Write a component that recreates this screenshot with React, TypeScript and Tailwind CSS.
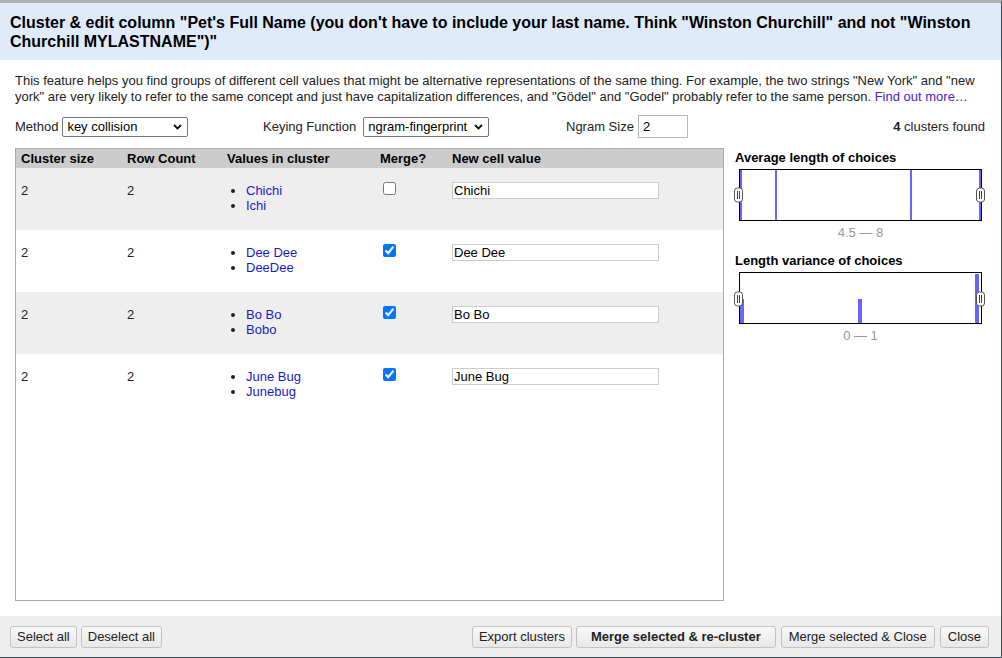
import { ReactNode } from "react";

type Cluster = {
    size: number;
    rowCount: number;
    values: string[];
    merge: boolean;
    newValue: string;
};

const clusters: Cluster[] = [
    { size: 2, rowCount: 2, values: ["Chichi", "Ichi"], merge: false, newValue: "Chichi" },
    { size: 2, rowCount: 2, values: ["Dee Dee", "DeeDee"], merge: true, newValue: "Dee Dee" },
    { size: 2, rowCount: 2, values: ["Bo Bo", "Bobo"], merge: true, newValue: "Bo Bo" },
    { size: 2, rowCount: 2, values: ["June Bug", "Junebug"], merge: true, newValue: "June Bug" },
];

const FakeSelect = function ({ value, width }: { value: string; width: string }) {
    return (
        <div className={`${width} h-[20px] flex items-center border border-[#767676] rounded-[2px] bg-white pl-[4px] pr-[5px]`}>
            <select className="appearance-none flex-1 min-w-0 bg-transparent outline-none text-[13px] leading-[18px] text-black">
                <option>{value}</option>
            </select>
            <svg width="9" height="6" viewBox="0 0 9 6" className="shrink-0">
                <path d="M1 1 L4.5 4.5 L8 1" fill="none" stroke="#111" strokeWidth="1.8" />
            </svg>
        </div>
    );
};

// slider handle sitting on the histogram edge
const Handle = ({ x, y }: { x: number; y: number }) => (
    <g>
        <rect x={x} y={y} width={8} height={14} rx={3} fill="#fff" stroke="#555" strokeWidth={1} />
        <line x1={x + 3} y1={y + 3} x2={x + 3} y2={y + 11} stroke="#444" strokeWidth={1} />
        <line x1={x + 5} y1={y + 3} x2={x + 5} y2={y + 11} stroke="#444" strokeWidth={1} />
    </g>
);

const Histogram = function ({ bars, handleY }: { bars: { x: number; w: number; y: number }[]; handleY: number }) {
    return (
        <svg width="243" height="52" viewBox="0 0 243 52" className="overflow-visible block ml-[4px]">
            <rect x="0.5" y="0.5" width="242" height="51" fill="#fff" stroke="#000" />
            {bars.map((b, i) => (
                <rect key={i} x={b.x} y={b.y} width={b.w} height={51 - b.y} fill="#6666ff" />
            ))}
            <Handle x={-4.5} y={handleY} />
            <Handle x={237.5} y={handleY} />
        </svg>
    );
};

const Button = ({ children, bold = false, className = "px-[6px]" }: { children: ReactNode; bold?: boolean; className?: string }) => (
    <button
        className={`h-[22px] border border-[#c2c2c2] rounded-[3px] bg-gradient-to-b from-[#f8f8f8] to-[#e8e8e8] text-[13px] text-[#222] leading-none ${bold ? "font-bold" : ""} ${className}`}>
        {children}
    </button>
);

export default function App() {
    return (
        <div
            className="w-[1002px] h-[658px] flex flex-col bg-white border-t-[3px] border-t-[#b0b0b0] border-r border-r-[#3f4c5b] border-b border-b-[#3f4c5b] text-[#222]"
            style={{ fontFamily: '"Liberation Sans", Arial, sans-serif' }}>
            {/* title bar */}
            <div className="h-[57px] shrink-0 bg-[#dfeafb] pl-[10px] pr-[20px] pt-[10px]">
                <h1 className="text-[16px] leading-[19px] font-bold text-black">
                    Cluster &amp; edit column "Pet's Full Name (you don't have to include your last name. Think "Winston Churchill" and not "Winston Churchill MYLASTNAME")"
                </h1>
            </div>

            <div className="flex-1 flex flex-col pl-[15px] pr-[15px] min-h-0">
                <p className="mt-[13px] text-[13px] leading-[16px] text-[#222]">
                    This feature helps you find groups of different cell values that might be alternative representations of the same thing. For example, the two strings "New York" and "new york" are very likely to refer to the same concept and just have capitalization differences, and "Gödel" and "Godel" probably refer to the same person.{" "}
                    <a href="#" className="text-[#4a22cf]">Find out more…</a>
                </p>

                <div className="mt-[10px] h-[23px] flex items-center text-[13px]">
                    <div className="w-[248px] flex items-center gap-[4px]">
                        <span>Method</span>
                        <FakeSelect value="key collision" width="w-[126px]" />
                    </div>
                    <div className="w-[303px] flex items-center gap-[7px]">
                        <span>Keying Function</span>
                        <FakeSelect value="ngram-fingerprint" width="w-[126px]" />
                    </div>
                    <div className="flex items-center gap-[4px]">
                        <span>Ngram Size</span>
                        <input
                            defaultValue="2"
                            className="w-[50px] h-[23px] border border-[#b5b5b5] px-[4px] text-[13px] text-black outline-none"
                        />
                    </div>
                    <div className="ml-auto mr-[1px]">
                        <b>4</b> clusters found
                    </div>
                </div>

                <div className="mt-[10px] flex-1 flex gap-[11px] min-h-0">
                    {/* cluster table */}
                    <div className="w-[709px] border border-[#aaa] text-[13px]">
                        <div className="h-[19px] flex items-center bg-[#cccccc] font-bold text-black">
                            <div className="w-[106px] pl-[5px]">Cluster size</div>
                            <div className="w-[100px] pl-[5px]">Row Count</div>
                            <div className="w-[153px] pl-[5px]">Values in cluster</div>
                            <div className="w-[72px] pl-[5px]">Merge?</div>
                            <div className="pl-[5px]">New cell value</div>
                        </div>
                        {clusters.map((c, i) => (
                            <div key={i} className={`h-[62px] flex items-start pt-[14px] leading-[15px] ${i % 2 === 0 ? "bg-[#eeeeee]" : "bg-white"}`}>
                                <div className="w-[106px] pl-[5px] pt-[1px]">{c.size}</div>
                                <div className="w-[100px] pl-[5px] pt-[1px]">{c.rowCount}</div>
                                <div className="w-[153px] pl-[5px] pt-[1px]">
                                    <ul className="list-disc pl-[19px]">
                                        {c.values.map((v) => (
                                            <li key={v}><a href="#" className="text-[#1a1acc]">{v}</a></li>
                                        ))}
                                    </ul>
                                </div>
                                <div className="w-[72px] pl-[8px]">
                                    <input type="checkbox" defaultChecked={c.merge} className="w-[13px] h-[13px] block" />
                                </div>
                                <div className="pl-[5px]">
                                    <input
                                        defaultValue={c.newValue}
                                        className="w-[207px] h-[17px] border border-[#cccccc] bg-white px-[1px] text-[13px] text-black outline-none"
                                    />
                                </div>
                            </div>
                        ))}
                    </div>

                    {/* facets */}
                    <div className="w-[250px] pt-[2px] text-[13px]">
                        <div className="font-bold text-black leading-[15px]">Average length of choices</div>
                        <div className="mt-[4px]">
                            <Histogram
                                handleY={19}
                                bars={[
                                    { x: 1, w: 2, y: 1 },
                                    { x: 36, w: 2, y: 1 },
                                    { x: 171, w: 2, y: 1 },
                                    { x: 240, w: 2, y: 1 },
                                ]}
                            />
                        </div>
                        <div className="mt-[4px] ml-[4px] w-[243px] text-center text-[#999] leading-[15px]">4.5 — 8</div>
                        <div className="mt-[13px] font-bold text-black leading-[15px]">Length variance of choices</div>
                        <div className="mt-[4px]">
                            <Histogram
                                handleY={20}
                                bars={[
                                    { x: 1, w: 4, y: 27 },
                                    { x: 119, w: 4, y: 27 },
                                    { x: 236, w: 4, y: 2 },
                                ]}
                            />
                        </div>
                        <div className="mt-[4px] ml-[4px] w-[243px] text-center text-[#999] leading-[15px]">0 — 1</div>
                    </div>
                </div>
            </div>

            {/* footer */}
            <div className="mt-[15px] h-[41px] shrink-0 bg-[#eeeeee] flex items-center pl-[10px] pr-[12px] gap-[4px]">
                <Button>Select all</Button>
                <Button>Deselect all</Button>
                <div className="flex-1" />
                <Button>Export clusters</Button>
                <Button bold className="px-[14px]">Merge selected &amp; re-cluster</Button>
                <Button className="px-[7px] ml-[1px]">Merge selected &amp; Close</Button>
                <Button className="px-[7px] ml-[1px]">Close</Button>
            </div>
        </div>
    );
}
